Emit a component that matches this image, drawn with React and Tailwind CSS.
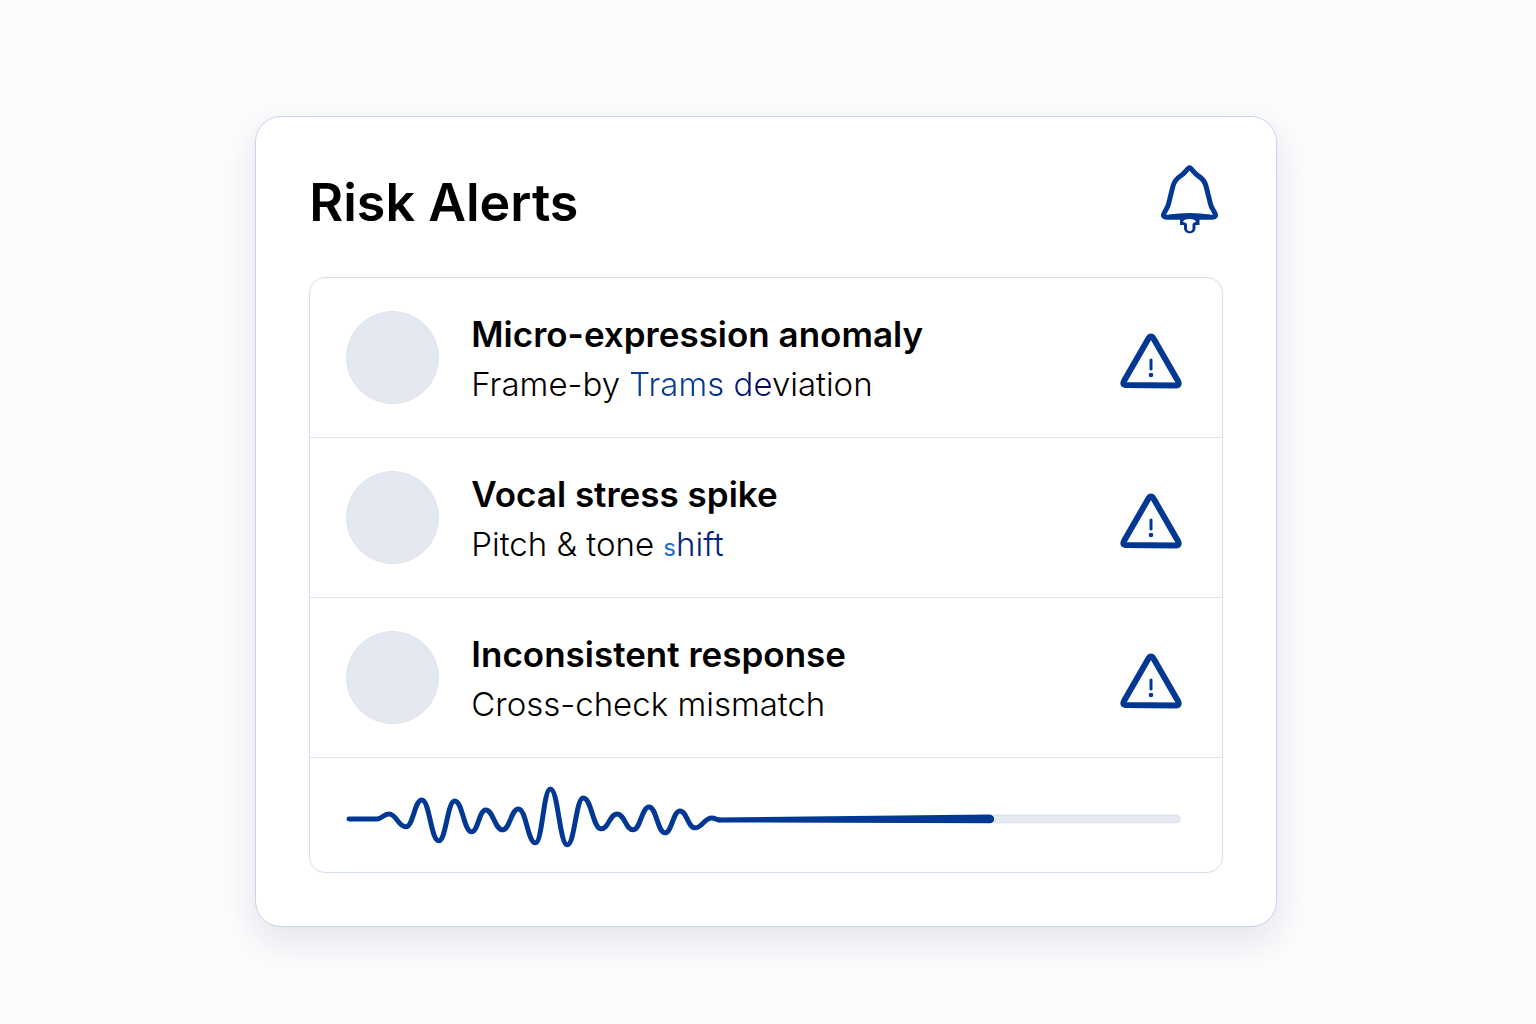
import { useId } from "react";

const alerts = [
  {
    title: "Micro-expression anomaly",
    detail: (
      <>
        Frame-by{" "}
        <span className="bg-linear-to-r from-[#0a3a8c] via-[#0a3f96] to-[#08005c] bg-clip-text text-transparent">
          Trams de
        </span>
        viation
      </>
    ),
  },
  {
    title: "Vocal stress spike",
    detail: (
      <>
        Pitch &amp; tone <span className="text-2xl font-normal text-[#1f6fc4]">s</span>
        <span className="text-[#04237c]">hift</span>
      </>
    ),
  },
  {
    title: "Inconsistent response",
    detail: "Cross-check mismatch",
  },
];

// peaks and troughs of the voice signal
const wave = [
  [31, 34],
  [43, 29],
  [60, 42],
  [76, 15],
  [93, 56],
  [109, 16],
  [126, 47],
  [140, 25],
  [157, 45],
  [173, 24],
  [190, 58],
  [205, 4],
  [222, 60],
  [238, 13],
  [256, 44],
  [272, 29],
  [288, 45],
  [304, 22],
  [320, 48],
  [335, 26],
  [350, 43],
  [367, 33],
  [375, 35],
];

function wavePath(points) {
  let d = `M3 34H${points[0][0]}`;
  for (let i = 1; i < points.length; i++) {
    const [x0, y0] = points[i - 1];
    const [x1, y1] = points[i];
    const k = (x1 - x0) * 0.46;
    d += `C${x0 + k} ${y0} ${x1 - k} ${y1} ${x1} ${y1}`;
  }
  return d;
}

function BellIcon() {
  return (
    <svg viewBox="0 0 60 70" className="mt-1 h-[70px] w-[60px]" fill="none" aria-hidden="true">
      <path
        d="M30.500 3.700C33 4.500 34.500 9 39.500 12C43.500 14.500 45.500 16.500 47 22L51.500 40C52.500 45 57 49 56.500 51.500C56 53.200 54.500 53.200 53 53.200H8C6.500 53.200 5 53.200 4.500 51.500C4 49 8.500 45 9.500 40L14 22C15.500 16.500 17.500 14.500 21.500 12C26.500 9 28 4.500 30.500 3.700Z"
        stroke="#003893"
        strokeWidth="5"
        strokeLinejoin="round"
      />
      <path d="M10 50.500Q30.500 47.500 51 50.500V54H10Z" fill="#003893" />
      <path
        d="M21 55H40.500V61H36.500V64C36.500 71 25 71 25 64V61H21Z"
        fill="#003893"
      />
      <path
        d="M24 57.500C26 54.300 35 54.300 37 57.500C36 59 33.500 58.500 33.500 60.500V64.500C33.500 68 28 68 28 64.500V60.500C28 58.500 25 59 24 57.500Z"
        fill="#fff"
      />
    </svg>
  );
}

function WarningIcon() {
  return (
    <svg viewBox="0 0 62 58" className="mt-1.5 h-[58px] w-[62px] shrink-0" fill="none" role="img" aria-label="Warning">
      <path
        d="M28.500 6.500Q31 2.500 33.500 6.500L58 49Q60 53.500 56 53.500L6 53Q2 53 4 49Z"
        stroke="#003893"
        strokeWidth="6"
        strokeLinejoin="round"
      />
      <path d="M31 28V37" stroke="#003893" strokeWidth="3" strokeLinecap="round" />
      <circle cx="31" cy="43" r="2.300" fill="#003893" />
    </svg>
  );
}

function AlertRow({ title, detail }) {
  return (
    <li className="flex h-40 items-center border-b border-[#dbe2ee] pr-10 pl-9">
      <div className="size-[93px] shrink-0 rounded-full border border-[#dde4ee] bg-[#e4e9f1]" />
      <div className="ml-8 flex-1 pt-0.5">
        <h2 className="text-[35px] leading-[50px] font-semibold">{title}</h2>
        <p className="text-[33px] leading-[50px] font-light">{detail}</p>
      </div>
      <WarningIcon />
    </li>
  );
}

function VoiceTrack() {
  const titleId = useId();
  return (
    <svg viewBox="0 0 838 66" className="w-full" fill="none" role="img" aria-labelledby={titleId}>
      <title id={titleId}>Voice signal</title>
      <rect x="648" y="30" width="189" height="8" rx="4" fill="#e4e9f2" stroke="#d8e0ec" />
      <path
        d="M374 32.500L645 29.500C652 29.500 652 38.500 645 38.500L374 37.500Z"
        fill="#003893"
        stroke="#fff"
        strokeWidth="1"
        paintOrder="stroke"
      />
      <path
        d={wavePath(wave)}
        stroke="#003893"
        strokeWidth="5"
        strokeLinecap="round"
        strokeLinejoin="round"
      />
    </svg>
  );
}

export default function App() {
  return (
    <main className="flex min-h-screen items-center justify-center bg-[#fcfcfe] pt-[19px] pr-1 font-['Inter',sans-serif] text-black">
      <section className="w-2/3 min-w-[900px] rounded-[26px] border border-[#c6d5ea] bg-white px-[53px] pb-[53px] shadow-[0_14px_36px_rgba(30,30,70,0.11)]">
        <header className="flex h-40 items-center justify-between pr-1">
          <h1 className="pt-3 text-[52px] font-semibold">Risk Alerts</h1>
          <BellIcon />
        </header>
        <div className="rounded-2xl border border-[#d3dfef]">
          <ul>
            {alerts.map((alert) => (
              <AlertRow key={alert.title} title={alert.title} detail={alert.detail} />
            ))}
          </ul>
          <div className="flex h-[114px] items-center pt-1.5 pr-10 pl-9">
            <VoiceTrack />
          </div>
        </div>
      </section>
    </main>
  );
}
